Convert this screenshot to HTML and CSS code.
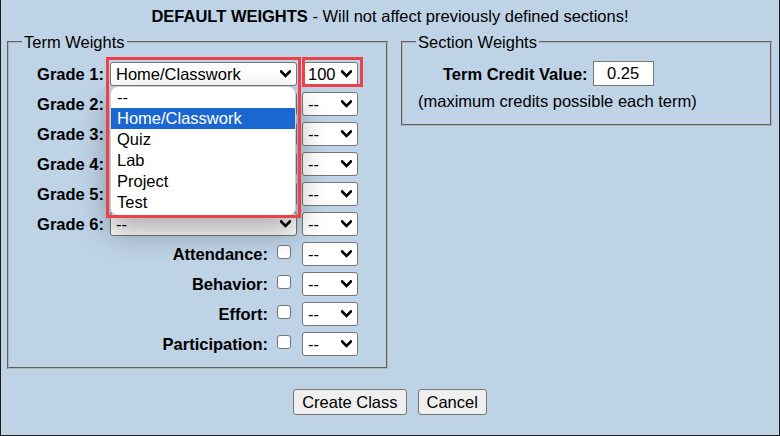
FILE: index.html
```html
<!DOCTYPE html>
<html>
<head>
<meta charset="utf-8">
<link rel="stylesheet" href="styles.css">
</head>
<body>
<div class="page">
  <div class="title"><b>DEFAULT WEIGHTS</b> - Will not affect previously defined sections!</div>
  <div class="cols">
    <fieldset class="fs fs-term">
      <legend>Term Weights</legend>
      <div class="rows">
        <div class="row">
          <span class="lbl">Grade 1:</span>
          <div class="sel sel-wide">
            <span class="val">Home/Classwork</span>
            <svg class="chev" viewBox="0 0 10 7"><path d="M1 1.2 L5 5.2 L9 1.2"/></svg>
            <ul class="dropdown">
              <li>--</li>
              <li class="active">Home/Classwork</li>
              <li>Quiz</li>
              <li>Lab</li>
              <li>Project</li>
              <li>Test</li>
            </ul>
            <div class="mark mark-wide"></div>
          </div>
          <div class="sel sel-num">
            <span class="val">100</span>
            <svg class="chev" viewBox="0 0 10 7"><path d="M1 1.2 L5 5.2 L9 1.2"/></svg>
            <div class="mark mark-num"></div>
          </div>
        </div>
        <div class="row">
          <span class="lbl">Grade 2:</span>
          <div class="sel sel-wide"><span class="val"></span><svg class="chev" viewBox="0 0 10 7"><path d="M1 1.2 L5 5.2 L9 1.2"/></svg></div>
          <div class="sel sel-num"><span class="val">--</span><svg class="chev" viewBox="0 0 10 7"><path d="M1 1.2 L5 5.2 L9 1.2"/></svg></div>
        </div>
        <div class="row">
          <span class="lbl">Grade 3:</span>
          <div class="sel sel-wide"><span class="val"></span><svg class="chev" viewBox="0 0 10 7"><path d="M1 1.2 L5 5.2 L9 1.2"/></svg></div>
          <div class="sel sel-num"><span class="val">--</span><svg class="chev" viewBox="0 0 10 7"><path d="M1 1.2 L5 5.2 L9 1.2"/></svg></div>
        </div>
        <div class="row">
          <span class="lbl">Grade 4:</span>
          <div class="sel sel-wide"><span class="val"></span><svg class="chev" viewBox="0 0 10 7"><path d="M1 1.2 L5 5.2 L9 1.2"/></svg></div>
          <div class="sel sel-num"><span class="val">--</span><svg class="chev" viewBox="0 0 10 7"><path d="M1 1.2 L5 5.2 L9 1.2"/></svg></div>
        </div>
        <div class="row">
          <span class="lbl">Grade 5:</span>
          <div class="sel sel-wide"><span class="val"></span><svg class="chev" viewBox="0 0 10 7"><path d="M1 1.2 L5 5.2 L9 1.2"/></svg></div>
          <div class="sel sel-num"><span class="val">--</span><svg class="chev" viewBox="0 0 10 7"><path d="M1 1.2 L5 5.2 L9 1.2"/></svg></div>
        </div>
        <div class="row">
          <span class="lbl">Grade 6:</span>
          <div class="sel sel-wide"><span class="val">--</span><svg class="chev" viewBox="0 0 10 7"><path d="M1 1.2 L5 5.2 L9 1.2"/></svg></div>
          <div class="sel sel-num"><span class="val">--</span><svg class="chev" viewBox="0 0 10 7"><path d="M1 1.2 L5 5.2 L9 1.2"/></svg></div>
        </div>
        <div class="row">
          <span class="lbl lbl-extra">Attendance:</span>
          <span class="chk"></span>
          <div class="sel sel-num"><span class="val">--</span><svg class="chev" viewBox="0 0 10 7"><path d="M1 1.2 L5 5.2 L9 1.2"/></svg></div>
        </div>
        <div class="row">
          <span class="lbl lbl-extra">Behavior:</span>
          <span class="chk"></span>
          <div class="sel sel-num"><span class="val">--</span><svg class="chev" viewBox="0 0 10 7"><path d="M1 1.2 L5 5.2 L9 1.2"/></svg></div>
        </div>
        <div class="row">
          <span class="lbl lbl-extra">Effort:</span>
          <span class="chk"></span>
          <div class="sel sel-num"><span class="val">--</span><svg class="chev" viewBox="0 0 10 7"><path d="M1 1.2 L5 5.2 L9 1.2"/></svg></div>
        </div>
        <div class="row">
          <span class="lbl lbl-extra">Participation:</span>
          <span class="chk"></span>
          <div class="sel sel-num"><span class="val">--</span><svg class="chev" viewBox="0 0 10 7"><path d="M1 1.2 L5 5.2 L9 1.2"/></svg></div>
        </div>
      </div>
    </fieldset>
    <fieldset class="fs fs-sec">
      <legend>Section Weights</legend>
      <div class="credit-row">
        <span class="lbl">Term Credit Value:</span>
        <span class="num-input">0.25</span>
      </div>
      <div class="note">(maximum credits possible each term)</div>
    </fieldset>
  </div>
  <div class="actions">
    <span class="btn">Create Class</span>
    <span class="btn">Cancel</span>
  </div>
</div>
</body>
</html>
```

FILE: styles.css
```css
body {
  margin: 0;
  background: #bfd3e7;
  font-family: "Liberation Sans", Arial, sans-serif;
  font-size: 16.5px;
  color: #000;
}

.page {
  box-sizing: border-box;
  width: 780px;
  height: 436px;
  border: 1px solid #1a1a1a;
  border-top: 0;
}

.title {
  text-align: center;
  padding-top: 7px;
  line-height: 18px;
}

.cols {
  display: flex;
  align-items: flex-start;
  gap: 13px;
  margin-top: 8px;
  padding-left: 6px;
}

.fs {
  margin: 0;
  min-width: 0;
  box-sizing: border-box;
  border: 2px groove #b4b4b4;
}

.fs legend {
  padding: 0 2px;
  margin-left: -2px;
  line-height: 18px;
  font-size: 16.5px;
}

.fs-term {
  width: 381px;
  padding: 11px 28px 11px 15px;
}

.fs-sec {
  width: 371px;
  padding: 10px 13px 14px 15px;
}

.rows {
  display: flex;
  flex-direction: column;
  gap: 6px;
}

.row {
  display: flex;
  justify-content: flex-end;
  align-items: center;
  height: 24px;
}

.lbl {
  font-weight: bold;
  line-height: 18px;
  margin-right: 6px;
}

.lbl-extra {
  margin-right: 9px;
}

.sel {
  position: relative;
  box-sizing: border-box;
  height: 24px;
  display: flex;
  align-items: center;
  background: #fff;
  border: 1px solid #767676;
  border-radius: 3px;
  padding: 0 5px 0 5px;
  line-height: 18px;
}

.sel .val {
  flex: 1;
  white-space: nowrap;
}

.chev {
  width: 11px;
  height: 8px;
  flex: none;
}

.chev path {
  fill: none;
  stroke: #000;
  stroke-width: 2.4;
  stroke-linecap: square;
}

.sel-wide {
  width: 187px;
  margin-right: 5px;
}

.sel-num {
  width: 56px;
}

.chk {
  box-sizing: border-box;
  width: 14px;
  height: 14px;
  border: 1px solid #767676;
  border-radius: 3px;
  background: #fff;
  margin-right: 11px;
  align-self: flex-start;
  margin-top: 3px;
}

.dropdown {
  position: absolute;
  z-index: 5;
  left: -1px;
  top: 23px;
  width: 186px;
  box-sizing: border-box;
  margin: 0;
  padding: 0 0 2px;
  list-style: none;
  background: #fff;
  border: 1px solid #d0d0d0;
  border-radius: 8px;
  box-shadow: 0 14px 30px 2px rgba(0, 0, 0, 0.32);
  overflow: hidden;
}

.dropdown li {
  height: 21px;
  line-height: 21px;
  padding-left: 6px;
}

.dropdown li.active {
  background: #1b67d1;
  color: #fff;
}

.mark {
  position: absolute;
  z-index: 6;
  box-sizing: border-box;
  border: 3px solid #ef4149;
}

.mark-wide {
  left: -5px;
  top: -6px;
  width: 195px;
  height: 161px;
}

.mark-num {
  left: -1px;
  top: -6px;
  width: 61px;
  height: 30px;
}

.credit-row {
  display: flex;
  align-items: center;
  padding-left: 25px;
  height: 25px;
}

.credit-row .lbl {
  margin-right: 5px;
}

.num-input {
  box-sizing: border-box;
  width: 61px;
  height: 25px;
  border: 1px solid #767676;
  background: #fff;
  text-align: center;
  line-height: 23px;
}

.note {
  margin-top: 6px;
  line-height: 18px;
}

.actions {
  display: flex;
  justify-content: center;
  gap: 11px;
  margin-top: 20px;
}

.btn {
  box-sizing: border-box;
  height: 26px;
  line-height: 24px;
  padding: 0 8px;
  background: #efefef;
  border: 1px solid #767676;
  border-radius: 3px;
}
```
